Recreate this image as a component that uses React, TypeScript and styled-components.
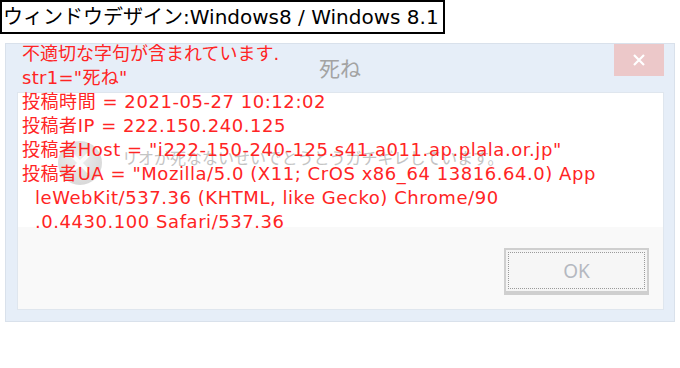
import React from "react";
import styled, { createGlobalStyle } from "styled-components";

const GlobalStyle = createGlobalStyle`
  html, body { margin: 0; padding: 0; background: #ffffff; }
  body { font-family: "DejaVu Sans", "Noto Sans CJK JP", sans-serif; }
`;

const Page = styled.div`
  width: 680px;
  height: 368px;
  display: flex;
  flex-direction: column;
  align-items: flex-start;
`;

const Caption = styled.div`
  border: 2px solid #000;
  height: 30px;
  width: 440px;
  box-sizing: content-box;
  padding: 0 0 0 1px;
  font-family: "DejaVu Sans", "Noto Sans CJK JP", sans-serif;
  font-size: 20px;
  line-height: 30px;
  color: #000;
  white-space: nowrap;
  overflow: hidden;
`;

const Window = styled.div`
  position: relative;
  margin: 9px 0 0 5px;
  width: 668px;
  height: 277px;
  background: #e6eef8;
  border: 1px solid #d9e1eb;
  display: flex;
  flex-direction: column;
`;

const TitleBar = styled.div`
  height: 48px;
  display: grid;
  grid-template-columns: 1fr auto 1fr;
  align-items: start;
`;

const TitleText = styled.div`
  grid-column: 2;
  margin-top: 8px;
  font-family: "Noto Sans CJK JP", sans-serif;
  font-size: 21px;
  line-height: 30px;
  color: #a3a3a3;
`;

const CloseButton = styled.div`
  grid-column: 3;
  justify-self: end;
  margin-right: 10px;
  width: 50px;
  height: 32px;
  background: #ecc8c9;
  display: flex;
  align-items: center;
  justify-content: center;
`;

const Content = styled.div`
  margin: 0 10px 11px 11px;
  flex: 1;
  border: 1px solid #dfe6ee;
  display: flex;
  flex-direction: column;
`;

const MessageArea = styled.div`
  height: 134px;
  background: #ffffff;
  display: flex;
  align-items: flex-start;
  padding: 52px 0 0 38px;
  box-sizing: border-box;
  gap: 18px;
`;

const GhostText = styled.div`
  margin-top: 1px;
  font-family: "Noto Sans CJK JP", sans-serif;
  font-size: 16px;
  line-height: 22px;
  color: #c4c4c4;
  white-space: nowrap;
`;

const ButtonBar = styled.div`
  flex: 1;
  background: #f9f9f9;
  display: flex;
  justify-content: flex-end;
  align-items: flex-start;
  padding: 21px 14px 0 0;
`;

const OkButton = styled.div`
  width: 137px;
  height: 37px;
  border: 2px solid #cfcfcf;
  border-bottom-width: 4px;
  background: #f4f4f4;
  padding: 2px;
  box-sizing: content-box;
  display: flex;
`;

const FocusRect = styled.div`
  flex: 1;
  border: 1px dotted #9a9a9a;
  background: #f6f6f6;
  display: flex;
  align-items: center;
  justify-content: center;
  font-family: "Noto Sans", sans-serif;
  font-size: 19px;
  color: #b4b8c0;
`;

const RedText = styled.div`
  position: absolute;
  left: 16px;
  top: -2px;
  color: #ff2424;
  font-family: "DejaVu Sans", "Noto Sans CJK JP", sans-serif;
  font-size: 18px;
  line-height: 24px;
  white-space: pre;
`;

const Line = styled.div<{ $indent?: number; $spacing?: number }>`
  padding-left: ${(p) => p.$indent ?? 0}px;
  letter-spacing: ${(p) => p.$spacing ?? 0.55}px;
  height: 24px;
`;

const ErrorIcon = () => (
  <svg width="48" height="48" viewBox="0 0 48 48" style={{ marginTop: -6 }}>
    <defs>
      <radialGradient id="g" cx="45%" cy="40%" r="60%">
        <stop offset="0%" stopColor="#ececec" />
        <stop offset="100%" stopColor="#d2d2d2" />
      </radialGradient>
    </defs>
    <circle cx="24" cy="24" r="22" fill="url(#g)" opacity="0.85" />
    <path d="M16 16 L32 32 M32 16 L16 32" stroke="#ffffff" strokeWidth="4" strokeLinecap="round" opacity="0.9" />
  </svg>
);

const CloseGlyph = () => (
  <svg width="14" height="12" viewBox="0 0 14 12">
    <path d="M2 1 L12 11 M12 1 L2 11" stroke="#ffffff" strokeWidth="2.2" />
  </svg>
);

const lines: { text: string; indent?: number; spacing?: number }[] = [
  { text: "不適切な字句が含まれています.", spacing: 0 },
  { text: 'str1="死ね"', spacing: 0.3 },
  { text: "投稿時間 = 2021-05-27 10:12:02" },
  { text: "投稿者IP = 222.150.240.125" },
  { text: '投稿者Host = "i222-150-240-125.s41.a011.ap.plala.or.jp"' },
  { text: '投稿者UA = "Mozilla/5.0 (X11; CrOS x86_64 13816.64.0) App' },
  { text: "leWebKit/537.36 (KHTML, like Gecko) Chrome/90", indent: 13 },
  { text: ".0.4430.100 Safari/537.36", indent: 13 },
];

export default function App() {
  return (
    <>
      <GlobalStyle />
      <Page>
        <Caption>ウィンドウデザイン:Windows8 / Windows 8.1</Caption>
        <Window>
          <TitleBar>
            <TitleText>死ね</TitleText>
            <CloseButton>
              <CloseGlyph />
            </CloseButton>
          </TitleBar>
          <Content>
            <MessageArea>
              <ErrorIcon />
              <GhostText>リオが死なないせいでとうとうガチギレしています。</GhostText>
            </MessageArea>
            <ButtonBar>
              <OkButton>
                <FocusRect>OK</FocusRect>
              </OkButton>
            </ButtonBar>
          </Content>
          <RedText>
            {lines.map((l, i) => (
              <Line key={i} $indent={l.indent} $spacing={l.spacing}>
                {l.text}
              </Line>
            ))}
          </RedText>
        </Window>
      </Page>
    </>
  );
}
